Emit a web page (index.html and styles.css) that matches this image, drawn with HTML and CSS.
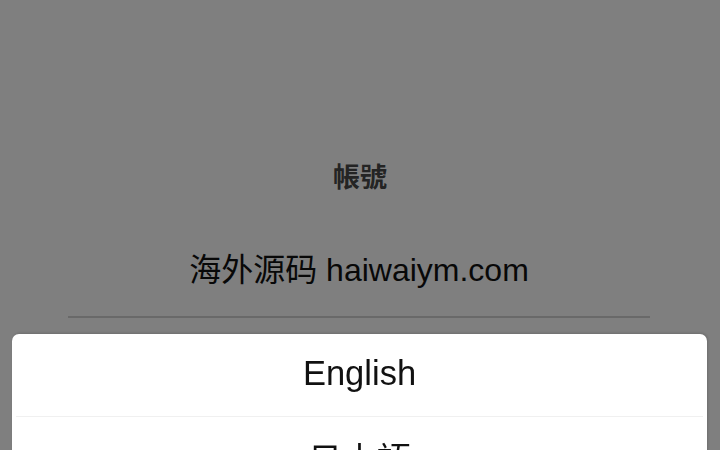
FILE: index.html
```html
<!DOCTYPE html>
<html lang="zh">
<head>
<meta charset="utf-8">
<title>帳號</title>
<link rel="stylesheet" href="styles.css">
</head>
<body>
<main class="page">
  <div class="label">帳號</div>
  <div class="field">
    <div class="value">海外源码 haiwaiym.com</div>
  </div>
</main>
<div class="mask"></div>
<div class="sheet">
  <div class="option">English</div>
  <div class="divider"></div>
  <div class="option jp">日本語</div>
  <div class="divider"></div>
  <div class="option">中文</div>
</div>
</body>
</html>
```

FILE: styles.css
```css
html, body {
  margin: 0;
  padding: 0;
  background: #fff;
  font-family: "Liberation Sans", "Noto Sans CJK SC", "Noto Sans CJK TC", sans-serif;
  overflow: hidden;
  height: 100%;
}

.page {
  padding-top: 158px;
  display: flex;
  flex-direction: column;
  align-items: center;
}

.label {
  font-family: "Liberation Sans", "Noto Sans CJK TC", sans-serif;
  font-size: 27px;
  line-height: 40px;
  height: 40px;
  font-weight: 700;
  color: #484848;
  text-align: center;
}

.field {
  align-self: stretch;
  margin: 47px 70px 0 68px;
  border-bottom: 2px solid #d2d2d2;
  padding-bottom: 21px;
  display: flex;
  justify-content: center;
}

.value {
  font-size: 32px;
  line-height: 50px;
  height: 50px;
  color: #111;
  letter-spacing: 0;
}

.mask {
  position: fixed;
  inset: 0;
  background: rgba(0, 0, 0, 0.5);
}

.sheet {
  position: fixed;
  left: 12px;
  right: 13px;
  top: 334px;
  background: #fff;
  border-radius: 7px;
  box-shadow: 1px -1px 3px rgba(0, 0, 0, 0.15);
}

.option {
  height: 82px;
  display: flex;
  align-items: center;
  justify-content: center;
  font-size: 34.5px;
  color: #111;
  padding-bottom: 3px;
  box-sizing: border-box;
}

.option.jp {
  font-family: "Liberation Sans", "Noto Sans CJK JP", sans-serif;
}

.divider {
  height: 1px;
  margin: 0 4px;
  background: #f0f0f0;
}
```
